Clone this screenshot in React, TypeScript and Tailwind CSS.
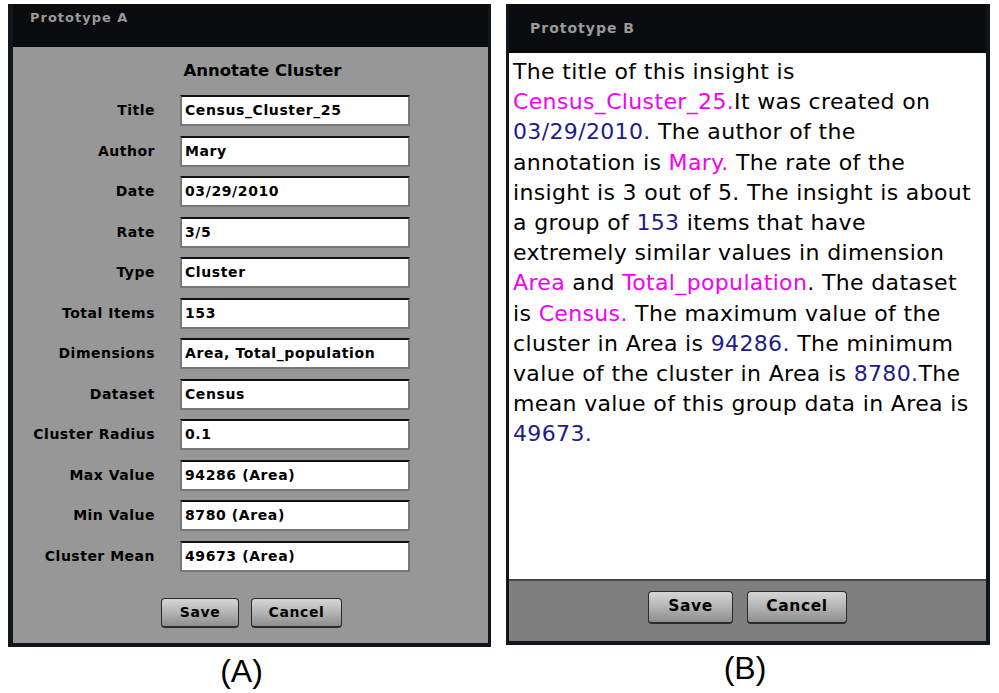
import React from "react";

const rows: [string, string][] = [
  ["Title", "Census_Cluster_25"],
  ["Author", "Mary"],
  ["Date", "03/29/2010"],
  ["Rate", "3/5"],
  ["Type", "Cluster"],
  ["Total Items", "153"],
  ["Dimensions", "Area, Total_population"],
  ["Dataset", "Census"],
  ["Cluster Radius", "0.1"],
  ["Max Value", "94286 (Area)"],
  ["Min Value", "8780 (Area)"],
  ["Cluster Mean", "49673 (Area)"],
];

const M = ({ children }: { children: React.ReactNode }) => (
  <span className="text-[#f500f5]">{children}</span>
);
const N = ({ children }: { children: React.ReactNode }) => (
  <span className="text-[#1c1c8a]">{children}</span>
);

function Btn({ label, w, h, size }: { label: string; w: string; h: string; size: string }) {
  return (
    <button
      className={`${w} ${h} ${size} flex items-center justify-center rounded-[4px] border border-[#2a2a2a] border-b-2 bg-gradient-to-b from-[#d6d6d6] via-[#b4b4b4] to-[#8e8e8e] font-bold tracking-[0.6px] text-black`}
      style={{ fontFamily: '"DejaVu Sans", Verdana, sans-serif' }}
    >
      {label}
    </button>
  );
}

export default function App() {
  const font = { fontFamily: '"DejaVu Sans", Verdana, sans-serif' };
  return (
    <div className="w-[999px] h-[693px] bg-white flex pl-[8px] pt-[4px] gap-[15px]" style={font}>
      {/* Panel A */}
      <div className="flex flex-col items-center w-[483px]">
        <div className="w-full bg-[#10161a] pl-[5px] pr-[3px] pb-[4px] flex flex-col">
          <div className="h-[43px] bg-[#0a0b0d] pl-[17px] pt-[6px] text-[13px] leading-[16px] font-bold tracking-[1px] text-[#9a9a9a]">
            Prototype A
          </div>
          <div className="bg-[#979797] flex flex-col items-center pt-[14px] pb-[15px]">
            <div className="h-[20px] leading-[20px] text-[16.5px] font-bold text-black pl-[24px]">
              Annotate Cluster
            </div>
            <div className="mt-[14px] flex flex-col gap-[9.55px] w-full">
              {rows.map(([l, v]) => (
                <div key={l} className="flex items-center h-[31px]">
                  <div className="w-[142px] text-right text-[14px] font-bold tracking-[0.5px] text-black">{l}</div>
                  <div className="ml-[25px] w-[230px] h-[31px] bg-white border-2 border-[#777] border-t-[#111] flex items-center pl-[3px] text-[14px] font-bold tracking-[0.6px] text-black">
                    {v}
                  </div>
                </div>
              ))}
            </div>
            <div className="mt-[26px] flex gap-[12px] pl-[2px]">
              <Btn label="Save" w="w-[78px]" h="h-[30px]" size="text-[14px]" />
              <Btn label="Cancel" w="w-[91px]" h="h-[30px]" size="text-[14px]" />
            </div>
          </div>
        </div>
        <div className="mt-[6px] pr-[16px] text-[32px] leading-[36px] text-black" style={{ fontFamily: '"Liberation Sans", Arial, sans-serif' }}>
          (A)
        </div>
      </div>

      {/* Panel B */}
      <div className="flex flex-col items-center w-[484px]">
        <div className="w-full bg-[#10161a] pl-[3px] pr-[4px] pb-[4px] flex flex-col">
          <div className="h-[49px] bg-[#0a0b0d] pl-[21px] pt-[15px] text-[14px] leading-[18px] font-bold tracking-[1px] text-[#9a9a9a]">
            Prototype B
          </div>
          <div className="h-[526px] bg-white pl-[4px] pt-[4px] text-[22px] leading-[30.2px] tracking-[0.35px] text-black whitespace-nowrap">
            <div>The title of this insight is</div>
            <div><M>Census_Cluster_25.</M>It was created on</div>
            <div><N>03/29/2010.</N> The author of the</div>
            <div>annotation is <M>Mary.</M> The rate of the</div>
            <div>insight is 3 out of 5. The insight is about</div>
            <div>a group of <N>153</N> items that have</div>
            <div>extremely similar values in dimension</div>
            <div><M>Area</M> and <M>Total_population</M>. The dataset</div>
            <div>is <M>Census.</M> The maximum value of the</div>
            <div>cluster in Area is <N>94286.</N> The minimum</div>
            <div>value of the cluster in Area is <N>8780.</N>The</div>
            <div>mean value of this group data in Area is</div>
            <div><N>49673.</N></div>
          </div>
          <div className="h-[62px] bg-[#7f7f7f] border-t-2 border-[#484848] flex justify-center gap-[14px] pt-[10px]">
            <Btn label="Save" w="w-[85px]" h="h-[33px]" size="text-[15.5px]" />
            <Btn label="Cancel" w="w-[100px]" h="h-[33px]" size="text-[15.5px]" />
          </div>
        </div>
        <div className="mt-[5px] pr-[6px] text-[32px] leading-[36px] text-black" style={{ fontFamily: '"Liberation Sans", Arial, sans-serif' }}>
          (B)
        </div>
      </div>
    </div>
  );
}
